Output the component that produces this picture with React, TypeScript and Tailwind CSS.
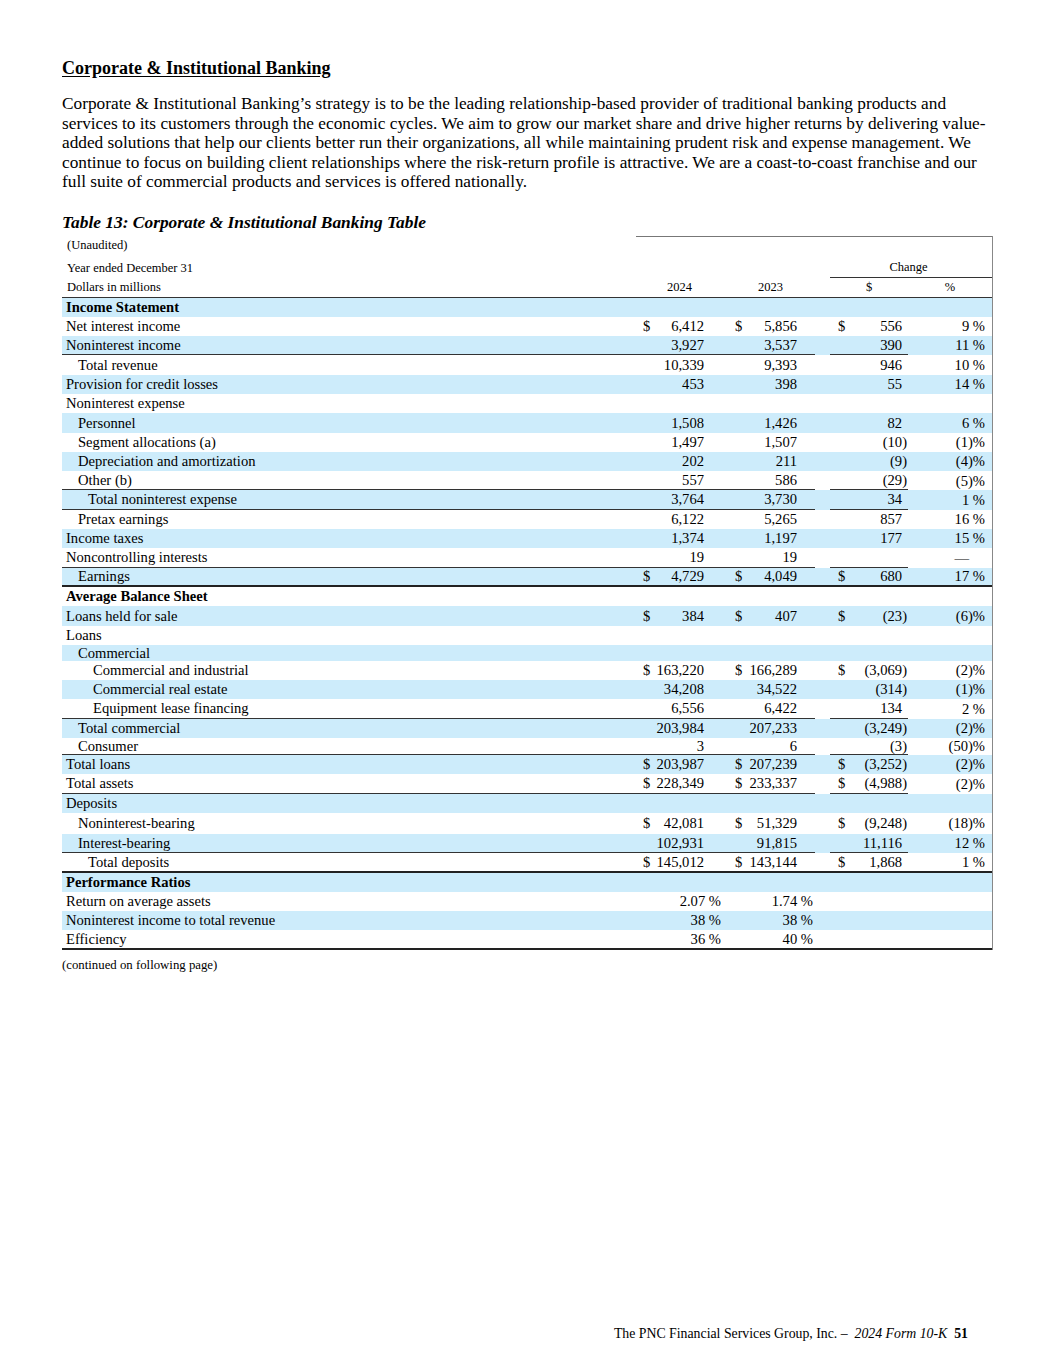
type Row = {
  label: string;
  indent?: 0 | 1 | 2 | 3;
  bold?: boolean;
  d?: boolean; // dollar signs
  a?: string;
  b?: string;
  c?: string;
  p?: string;
  ra?: string;
  rb?: string;
  line?: 'seg' | 'thick';
  h?: 'short' | 'shorter' | 'tall';
};

const rows: Row[] = [
  { label: 'Income Statement', bold: true },
  { label: 'Net interest income', d: true, a: '6,412', b: '5,856', c: '556', p: '9' },
  { label: 'Noninterest income', a: '3,927', b: '3,537', c: '390', p: '11', line: 'seg' },
  { label: 'Total revenue', indent: 1, a: '10,339', b: '9,393', c: '946', p: '10' },
  { label: 'Provision for credit losses', a: '453', b: '398', c: '55', p: '14' },
  { label: 'Noninterest expense' },
  { label: 'Personnel', indent: 1, a: '1,508', b: '1,426', c: '82', p: '6' },
  { label: 'Segment allocations (a)', indent: 1, a: '1,497', b: '1,507', c: '(10)', p: '(1)' },
  { label: 'Depreciation and amortization', indent: 1, a: '202', b: '211', c: '(9)', p: '(4)' },
  { label: 'Other (b)', indent: 1, a: '557', b: '586', c: '(29)', p: '(5)', line: 'seg' },
  { label: 'Total noninterest expense', indent: 2, a: '3,764', b: '3,730', c: '34', p: '1', line: 'seg' },
  { label: 'Pretax earnings', indent: 1, a: '6,122', b: '5,265', c: '857', p: '16' },
  { label: 'Income taxes', a: '1,374', b: '1,197', c: '177', p: '15' },
  { label: 'Noncontrolling interests', a: '19', b: '19', p: '—', line: 'seg' },
  { label: 'Earnings', indent: 1, d: true, a: '4,729', b: '4,049', c: '680', p: '17', line: 'thick' },
  { label: 'Average Balance Sheet', bold: true },
  { label: 'Loans held for sale', d: true, a: '384', b: '407', c: '(23)', p: '(6)' },
  { label: 'Loans' },
  { label: 'Commercial', indent: 1, h: 'short' },
  { label: 'Commercial and industrial', indent: 3, d: true, a: '163,220', b: '166,289', c: '(3,069)', p: '(2)' },
  { label: 'Commercial real estate', indent: 3, a: '34,208', b: '34,522', c: '(314)', p: '(1)' },
  { label: 'Equipment lease financing', indent: 3, a: '6,556', b: '6,422', c: '134', p: '2', line: 'seg' },
  { label: 'Total commercial', indent: 1, a: '203,984', b: '207,233', c: '(3,249)', p: '(2)' },
  { label: 'Consumer', indent: 1, a: '3', b: '6', c: '(3)', p: '(50)', line: 'seg', h: 'shorter' },
  { label: 'Total loans', d: true, a: '203,987', b: '207,239', c: '(3,252)', p: '(2)' },
  { label: 'Total assets', d: true, a: '228,349', b: '233,337', c: '(4,988)', p: '(2)', line: 'seg' },
  { label: 'Deposits' },
  { label: 'Noninterest-bearing', indent: 1, d: true, a: '42,081', b: '51,329', c: '(9,248)', p: '(18)', h: 'tall' },
  { label: 'Interest-bearing', indent: 1, a: '102,931', b: '91,815', c: '11,116', p: '12', line: 'seg' },
  { label: 'Total deposits', indent: 2, d: true, a: '145,012', b: '143,144', c: '1,868', p: '1', line: 'thick' },
  { label: 'Performance Ratios', bold: true },
  { label: 'Return on average assets', ra: '2.07 %', rb: '1.74 %' },
  { label: 'Noninterest income to total revenue', ra: '38 %', rb: '38 %' },
  { label: 'Efficiency', ra: '36 %', rb: '40 %', line: 'thick' },
];

const indents = ['pl-[4px]', 'pl-[16px]', 'pl-[26px]', 'pl-[31px]'];

function TableRow({ row, i }: { row: Row; i: number }) {
  const blue = i % 2 === 0 ? 'bg-[#cdecfb]' : 'bg-white';
  const height =
    row.h === 'short' ? 'h-[16px]' : row.h === 'shorter' ? 'h-[17px]' : row.h === 'tall' ? 'h-[21px]' : 'h-[19.3px]';
  const seg = row.line === 'seg' ? 'border-b border-[#333]' : '';
  const thick = row.line === 'thick' ? 'border-b-2 border-[#222]' : '';
  const neg = row.c?.startsWith('(');
  const pneg = row.p?.startsWith('(');

  return (
    <div className={`flex ${height} ${blue} ${thick}`}>
      <div className={`w-[574px] flex items-center ${indents[row.indent ?? 0]} ${seg} ${row.bold ? 'font-bold' : ''}`}>
        {row.label}
      </div>
      {row.ra ? (
        <div className={`w-[92px] flex items-center justify-end pr-[7px] ${seg}`}>{row.ra}</div>
      ) : (
        <div className={`w-[92px] flex items-center justify-between pl-[7px] pr-[24px] ${seg}`}>
          <span>{row.d ? '$' : ''}</span>
          <span>{row.a}</span>
        </div>
      )}
      {row.rb ? (
        <div className={`w-[87px] flex items-center justify-end pr-[2px] ${seg}`}>{row.rb}</div>
      ) : (
        <div className={`w-[87px] flex items-center justify-between pl-[7px] pr-[18px] ${seg}`}>
          <span>{row.d ? '$' : ''}</span>
          <span>{row.b}</span>
        </div>
      )}
      <div className="w-[15px]" />
      <div className={`w-[78px] flex items-center justify-between pl-[8px] pr-[1px] ${seg}`}>
        <span>{row.d ? '$' : ''}</span>
        <span>
          {row.c}
          {row.c && !neg ? <span className="invisible">)</span> : null}
        </span>
      </div>
      <div className="w-[84px] flex items-center justify-end pr-[7px]">
        {row.p === '—' ? (
          <span>
            —<span className="invisible"> %</span>
          </span>
        ) : row.p ? (
          <span>{pneg ? `${row.p}%` : `${row.p} %`}</span>
        ) : null}
      </div>
    </div>
  );
}

export default function App() {
  return (
    <div className="min-h-[1365px] w-[1055px] flex flex-col bg-white text-black font-['Liberation_Serif','Times_New_Roman',serif]">
      <div className="pl-[62px] pt-[58px]">
        <h1 className="text-[18px] leading-[20px] font-bold underline underline-offset-[2px]">
          Corporate &amp; Institutional Banking
        </h1>
        <p className="mt-[16px] w-[931px] text-[17.3px] leading-[19.5px]">
          Corporate &amp; Institutional Banking’s strategy is to be the leading relationship-based provider of
          traditional banking products and services to its customers through the economic cycles. We aim to grow
          our market share and drive higher returns by delivering value-added solutions that help our clients better
          run their organizations, all while maintaining prudent risk and expense management. We continue to focus on
          building client relationships where the risk-return profile is attractive. We are a coast-to-coast
          franchise and our full suite of commercial products and services is offered nationally.
        </p>
        <h2 className="mt-[20px] text-[17.4px] leading-[20px] font-bold italic">
          Table 13: Corporate &amp; Institutional Banking Table
        </h2>

        <div className="mt-[4px] w-[931px] border-r border-[#888] text-[14.6px] leading-none">
          {/* header */}
          <div className="flex h-[20px] text-[12.5px]">
            <div className="w-[574px] flex items-center pl-[5px]">(Unaudited)</div>
            <div className="flex-1 border-t border-[#777]" />
          </div>
          <div className="flex h-[22px] text-[12.5px]">
            <div className="w-[574px] flex items-center pl-[5px] pt-[3px]">Year ended December 31</div>
            <div className="w-[194px]" />
            <div className="flex-1 flex items-center justify-center pr-[5px] pt-[3px] border-b border-[#333]">Change</div>
          </div>
          <div className="flex h-[20px] text-[12.5px] border-b border-[#333]">
            <div className="w-[574px] flex items-center pl-[5px]">Dollars in millions</div>
            <div className="w-[92px] flex items-center justify-center pr-[5px]">2024</div>
            <div className="w-[87px] flex items-center justify-center pr-[2px]">2023</div>
            <div className="w-[15px]" />
            <div className="w-[78px] flex items-center justify-center">$</div>
            <div className="w-[84px] flex items-center justify-center">%</div>
          </div>
          {rows.map((row, i) => (
            <TableRow key={row.label} row={row} i={i} />
          ))}
        </div>
        <div className="mt-[8px] text-[12.8px] leading-[14px]">(continued on following page)</div>
      </div>

      <div className="flex-1" />
      <div className="pb-[23px] pr-[87px] text-right text-[13.8px] leading-[16px]">
        The PNC Financial Services Group, Inc. –&nbsp; <span className="italic">2024 Form 10-K</span>&nbsp;{' '}
        <span className="font-bold">51</span>
      </div>
    </div>
  );
}
